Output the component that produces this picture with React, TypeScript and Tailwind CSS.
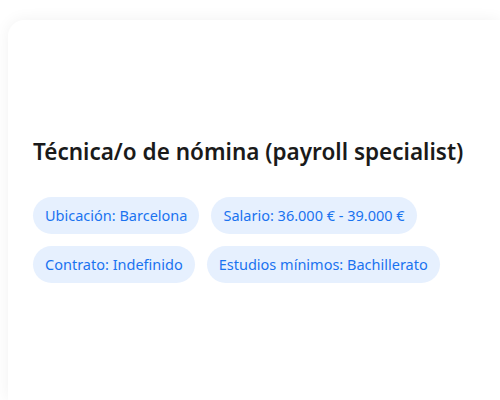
export default function App() {
  const tags = [
    "Ubicación: Barcelona",
    "Salario: 36.000 € - 39.000 €",
    "Contrato: Indefinido",
    "Estudios mínimos: Bachillerato",
  ]

  return (
    <div className="min-h-screen bg-white pl-2 pt-5 overflow-hidden" style={{ fontFamily: '"Noto Sans", "Open Sans", sans-serif' }}>
      <div className="min-h-[380px] rounded-tl-2xl bg-white pl-[25px] pt-[117px] shadow-[0_0_16px_rgba(0,0,0,0.06)]">
        <h1 className="text-[22.5px] leading-[30px] font-semibold text-[#1a1a1a] mb-[30px]">
          Técnica/o de nómina (payroll specialist)
        </h1>
        <div className="flex flex-wrap gap-3 max-w-[420px]">
          {tags.map((tag, index) => (
            <span
              key={index}
              className="rounded-full bg-[#e6f0fe] px-3 py-2 text-[14.5px] leading-[21px] text-[#1a73f0]"
            >
              {tag}
            </span>
          ))}
        </div>
      </div>
    </div>
  )
}
